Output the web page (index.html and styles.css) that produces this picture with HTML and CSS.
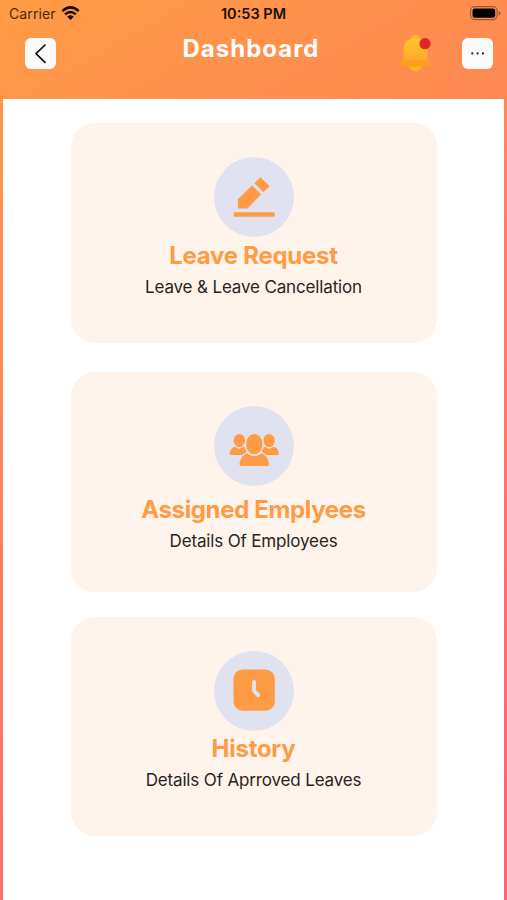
FILE: index.html
```
<!DOCTYPE html>
<html lang="en">
<head>
<meta charset="utf-8">
<title>Dashboard</title>
<link rel="stylesheet" href="styles.css">
</head>
<body>
<div class="screen">
  <div class="status">
    <div class="carrier"><span>Carrier</span>
      <svg width="19" height="14" viewBox="0 0 19 14" fill="none" stroke="#160b05" stroke-width="2.5"><path d="M1.3 5.2Q9.5-2.4 17.7 5.2M4.1 8.4Q9.5 3.5 14.9 8.4"/><path d="M9.5 14L6.2 10.7Q9.5 8 12.8 10.7Z" fill="#160b05" stroke="none"/></svg>
    </div>
    <div class="time">10:53 PM</div>
    <svg class="battery" width="31" height="15" viewBox="0 0 31 15"><rect x=".6" y=".6" width="26.5" height="13" rx="4" fill="none" stroke="#9a5733" stroke-width="1.1"/><rect x="2.5" y="2.4" width="22.7" height="9.4" rx="2.4" fill="#000"/><path d="M28.6 5v4.4q1.8-.8 1.8-2.2T28.6 5Z" fill="#9a5733"/></svg>
  </div>
  <header class="bar">
    <div class="button"><svg width="31" height="31" viewBox="0 0 31 31" fill="none" stroke="#111" stroke-width="1.7" stroke-linecap="round" stroke-linejoin="round"><path d="M20 7L11 15.7 20 24.4"/></svg></div>
    <h1>Dashboard</h1>
    <svg class="bell" width="34" height="39" viewBox="0 0 34 39">
      <defs><linearGradient id="gold" x1="0" y1="0" x2="0" y2="1"><stop offset="0" stop-color="#ffc72c"/><stop offset="1" stop-color="#ffa52b"/></linearGradient></defs>
      <circle cx="16.5" cy="5.5" r="4.8" fill="#ffb61f"/><circle cx="16.5" cy="31.4" r="6" fill="#ffb51f"/>
      <path d="M4.5 29V16C4.5 8 9 4.5 16.5 4.5S28.5 8 28.5 16V29Z" fill="url(#gold)"/>
      <rect x=".5" y="26.2" width="32" height="6.2" rx="3.1" fill="#ff9d20"/>
      <circle cx="26" cy="9.7" r="5.6" fill="#df2927"/>
    </svg>
    <div class="button"><svg width="31" height="31" viewBox="0 0 31 31" fill="#222"><circle cx="10.3" cy="15.4" r="1.1"/><circle cx="15.6" cy="15.4" r="1.1"/><circle cx="20.9" cy="15.4" r="1.1"/></svg></div>
  </header>
  <main>
    <section class="card">
      <div class="disc"><svg width="80" height="80" viewBox="0 0 80 80" fill="#ff9b44"><path d="M23.8 51.5V42.2L38 28.4 47.2 37.3 33.5 51.5Z"/><path d="M40.3 26.3L46.5 20.2 55.7 29 49.4 35.2Z"/><rect x="19.7" y="55.2" width="41" height="4.6" rx="1"/></svg></div>
      <h2 class="leave">Leave Request</h2>
      <p>Leave &amp; Leave Cancellation</p>
    </section>
    <section class="card">
      <div class="disc"><svg width="80" height="80" viewBox="-.5 0 80 80" fill="#ff9b44"><ellipse cx="24.8" cy="34.6" rx="5.7" ry="6.5"/><ellipse cx="54.6" cy="34.6" rx="5.7" ry="6.5"/><path d="M16.5 49Q14.8 49 15.2 46.5 16 42 20.5 40.7L24.8 43 29 40.7 32.2 42.5Q33 46 29 49Z"/><path d="M63 49Q64.7 49 64.3 46.5 63.5 42 59 40.7L54.6 43 50.5 40.7 47.3 42.5Q46.5 46 50.5 49Z"/><g stroke="#e0e3ef" stroke-width="1.2"><path d="M27.2 60.6Q24 60.6 24.5 57C25.5 50.5 28.5 48.5 32.5 46.5Q39.8 52.8 47 46.5C51 48.5 54 50.5 55 57Q55.5 60.6 52.4 60.6Z"/><ellipse cx="39.8" cy="38.2" rx="8.9" ry="10.7"/></g></svg></div>
      <h2 class="team">Assigned Emplyees</h2>
      <p>Details Of Employees</p>
    </section>
    <section class="card">
      <div class="disc"><svg width="80" height="80" viewBox="-.3 0 80 80"><rect x="19.2" y="18.5" width="41.3" height="41.2" rx="9" fill="#ff9b44"/><path d="M39.7 31V38.5Q39.7 39.9 40.7 40.9L43.8 44" fill="none" stroke="#e4e3e9" stroke-width="3.9" stroke-linecap="round"/></svg></div>
      <h2 class="history">History</h2>
      <p>Details Of Aprroved Leaves</p>
    </section>
  </main>
</div>
</body>
</html>
```
FILE: styles.css
```
* { box-sizing: border-box; }
body { margin: 0; font-family: Inter, "Liberation Sans", sans-serif; color: #29231f; }
svg { display: block; }
h1, h2, p { margin: 0; white-space: nowrap; }
.screen {
  height: 900px;
  padding: 0 3px;
  overflow: hidden;
  display: flex;
  flex-direction: column;
  background: linear-gradient(150.6deg, #ff9b44, #fc6075);
}
.status {
  height: 28px;
  flex: none;
  display: grid;
  grid-template-columns: 1fr auto 1fr;
  align-items: center;
  padding: 0 3px 0 6px;
  font-size: 14px;
  line-height: 28px;
}
.carrier { display: flex; align-items: center; gap: 5.5px; color: #4a2911; letter-spacing: .1px; }
.carrier svg { margin-bottom: 2px; }
.time { font-weight: 600; font-size: 14.5px; color: #201006; margin-left: -3px; }
.battery { justify-self: end; margin-bottom: 1px; }
.bar {
  height: 70.5px;
  flex: none;
  display: grid;
  grid-template-columns: 31px 1fr 34px 31px;
  align-items: start;
  padding: 10px 11.5px 0 22px;
}
.button { width: 31px; height: 31px; background: #fafafa; border-radius: 6px; }
.bar h1 {
  color: #fff;
  font-size: 24px;
  line-height: 30px;
  font-weight: 700;
  letter-spacing: 1px;
  margin: -4px 0 0 126.5px;
}
.bell { margin: -4px 0 0 -28.5px; }
main { flex: 1; background: #fff; display: flex; flex-direction: column; align-items: center; padding-top: 24.5px; }
.card {
  width: 366px;
  height: 220px;
  flex: none;
  border-radius: 24px;
  background: #fff4eb;
  padding-top: 34px;
  display: flex;
  flex-direction: column;
  align-items: center;
}
.card + .card { margin-top: 29px; }
.card + .card + .card { margin-top: 25px; height: 219px; padding-top: 33.5px; }
.disc { width: 80px; height: 80px; flex: none; border-radius: 50%; background: #e0e3ef; }
.card h2 { color: #ff9b44; font-size: 24px; line-height: 32px; font-weight: 700; letter-spacing: -.27px; margin-top: 3px; }
.card .team { letter-spacing: -.36px; margin-top: 8px; }
.card .history { margin-top: 2px; }
.card p { font-size: 17px; line-height: 24px; letter-spacing: -.15px; margin-top: 3px; }
```
